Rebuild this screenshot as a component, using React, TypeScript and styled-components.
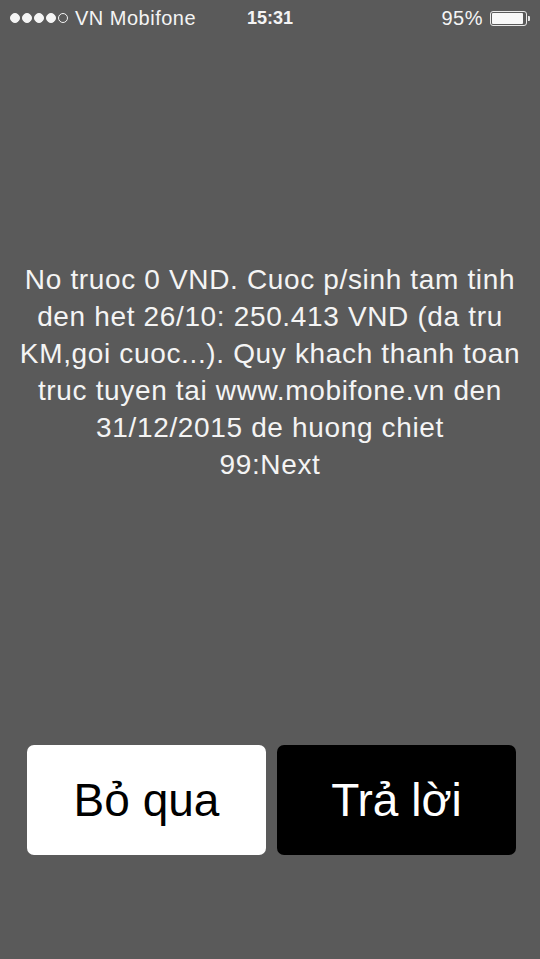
import styled, { createGlobalStyle } from "styled-components";

const GlobalStyle = createGlobalStyle`
    html, body {
        margin: 0;
        padding: 0;
        background: #5a5a5a;
    }
    * {
        box-sizing: border-box;
    }
`;

const messageLines = [
    "No truoc 0 VND. Cuoc p/sinh tam tinh",
    "den het 26/10: 250.413 VND (da tru",
    "KM,goi cuoc...). Quy khach thanh toan",
    "truc tuyen tai www.mobifone.vn den",
    "31/12/2015 de huong chiet",
    "99:Next",
];

const SignalDots = ({ filled, total }: { filled: number, total: number }) => (
    <DotsRow>
        {Array.from({ length: total }).map((_, i) => (
            <Dot key={i} $filled={i < filled} />
        ))}
    </DotsRow>
);

const Battery = ({ level }: { level: number }) => (
    <BatteryBody>
        <BatteryFill style={{ width: `${level}%` }} />
        <BatteryTip />
    </BatteryBody>
);

const App = () => {
    return <Screen>
        <GlobalStyle />
        <StatusBar>
            <StatusLeft>
                <SignalDots filled={4} total={5} />
                <Carrier>VN Mobifone</Carrier>
            </StatusLeft>
            <Clock>15:31</Clock>
            <StatusRight>
                <Percent>95%</Percent>
                <Battery level={95} />
            </StatusRight>
        </StatusBar>
        <Message>
            {messageLines.map((line, i) => <Line key={i}>{line}</Line>)}
        </Message>
        <Actions>
            <ActionButton $primary={false}>Bỏ qua</ActionButton>
            <ActionButton $primary={true}>Trả lời</ActionButton>
        </Actions>
    </Screen>
};

export default App;

const Screen = styled.div({
    width: '540px',
    height: '959px',
    backgroundColor: '#5a5a5a',
    display: 'flex',
    flexDirection: 'column',
    fontFamily: '"Liberation Sans", Arial, sans-serif',
    color: '#f4f4f4',
});

const StatusBar = styled.div({
    height: '36px',
    display: 'grid',
    gridTemplateColumns: '1fr auto 1fr',
    alignItems: 'center',
    padding: '0 10px 0 10px',
});

const StatusLeft = styled.div({
    display: 'flex',
    alignItems: 'center',
    gap: '7px',
});

const DotsRow = styled.div({
    display: 'flex',
    gap: '2px',
});

const Dot = styled.span<{ $filled: boolean }>(props => ({
    width: '10px',
    height: '10px',
    borderRadius: '50%',
    backgroundColor: props.$filled ? '#f4f4f4' : 'transparent',
    border: '1px solid #f4f4f4',
}));

const Carrier = styled.span({
    fontSize: '20px',
    lineHeight: '24px',
    letterSpacing: '0.5px',
});

const Clock = styled.span({
    fontSize: '18px',
    fontWeight: 700,
    lineHeight: '24px',
});

const StatusRight = styled.div({
    display: 'flex',
    alignItems: 'center',
    justifyContent: 'flex-end',
    gap: '7px',
});

const Percent = styled.span({
    fontSize: '20px',
    lineHeight: '24px',
    letterSpacing: '0.5px',
});

const BatteryBody = styled.div({
    position: 'relative',
    width: '37px',
    height: '15px',
    border: '1px solid #e8e8e8',
    borderRadius: '3px',
    padding: '1px',
    marginRight: '3px',
    display: 'flex',
});

const BatteryFill = styled.div({
    height: '100%',
    backgroundColor: '#f8f8f8',
    borderRadius: '1px',
});

const BatteryTip = styled.span({
    position: 'absolute',
    right: '-4px',
    top: '4px',
    width: '2px',
    height: '5px',
    backgroundColor: '#e8e8e8',
    borderRadius: '0 1px 1px 0',
});

const Message = styled.div({
    paddingTop: '225px',
    display: 'flex',
    flexDirection: 'column',
    alignItems: 'center',
    fontSize: '28px',
    lineHeight: '37px',
    letterSpacing: '0.65px',
});

const Line = styled.div({
    whiteSpace: 'nowrap',
});

const Actions = styled.div({
    marginTop: 'auto',
    marginBottom: '104px',
    display: 'flex',
    gap: '11px',
    padding: '0 24px 0 27px',
});

const ActionButton = styled.button<{ $primary: boolean }>(props => ({
    flex: 1,
    height: '110px',
    border: 'none',
    borderRadius: '7px',
    backgroundColor: props.$primary ? '#000000' : '#ffffff',
    color: props.$primary ? '#ffffff' : '#000000',
    fontFamily: '"Liberation Sans", Arial, sans-serif',
    fontSize: '46px',
    padding: 0,
    cursor: 'pointer',
}));
